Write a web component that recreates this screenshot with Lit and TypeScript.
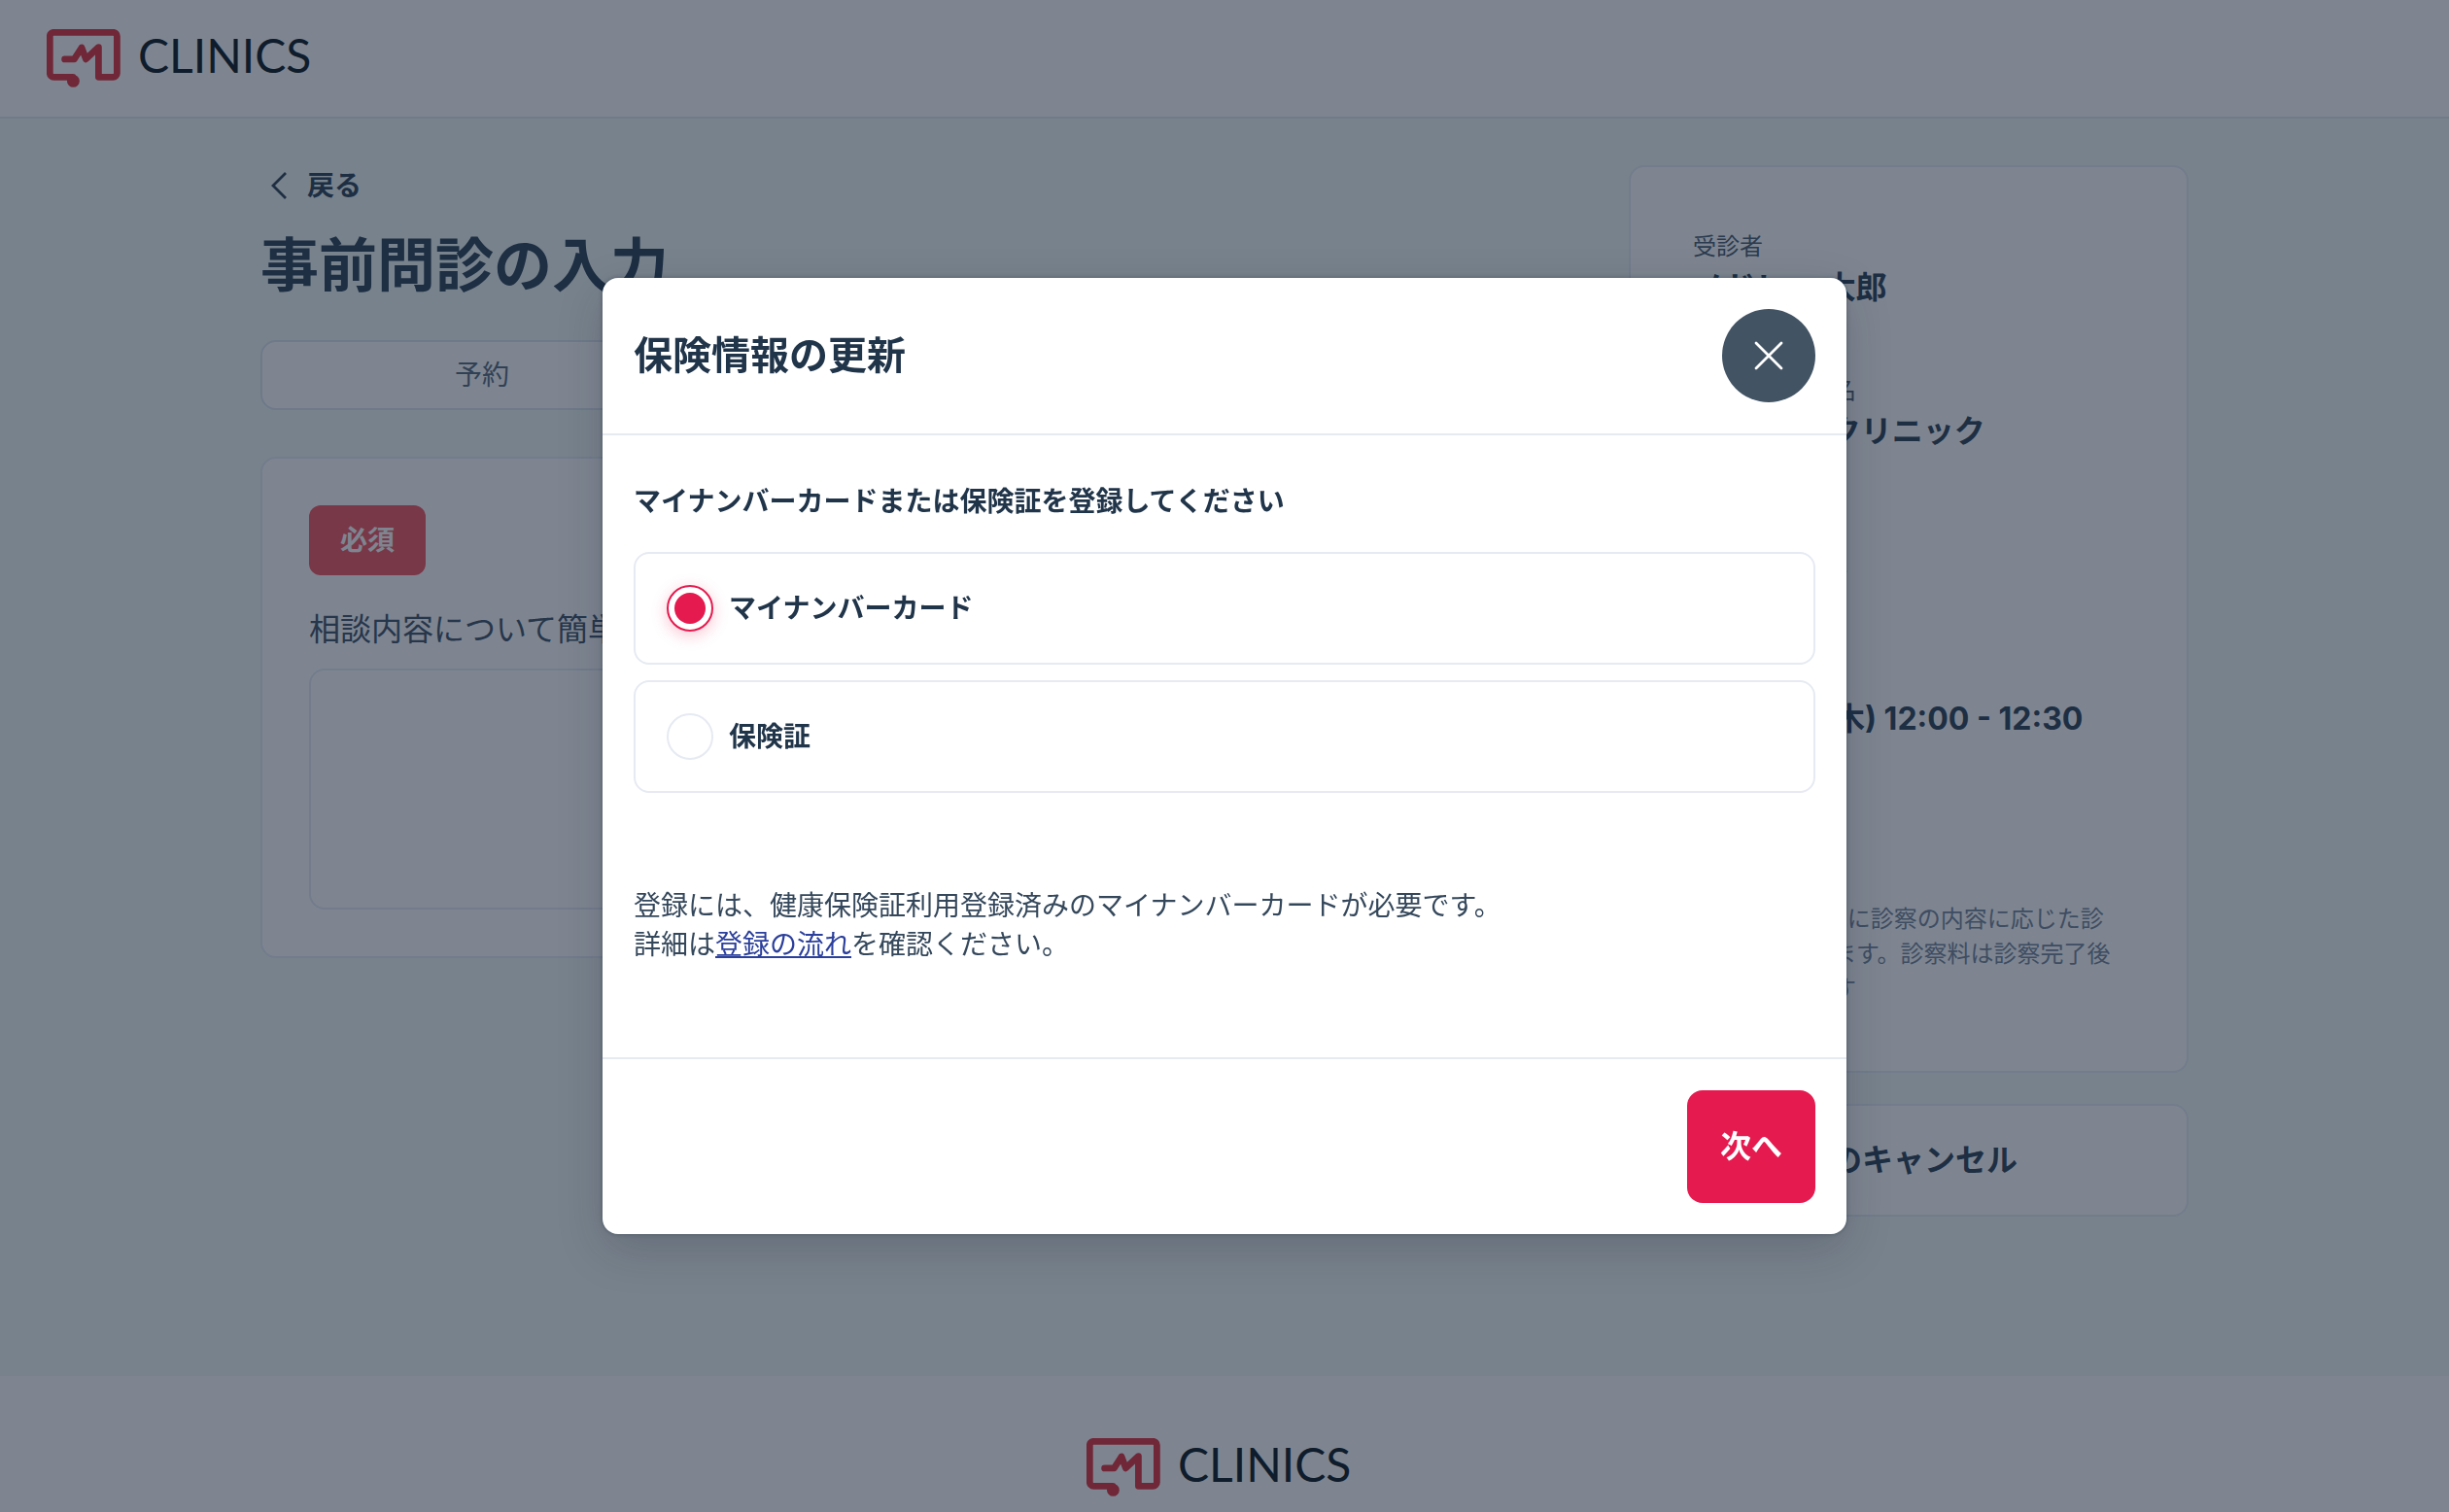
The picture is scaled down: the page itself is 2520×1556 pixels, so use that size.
import { LitElement, html, css } from "lit";
import { customElement, property, state } from "lit/decorators.js";

@customElement("clinics-logo")
class ClinicsLogo extends LitElement {
  static styles = css`
    :host {
      display: flex;
      align-items: center;
      gap: 18px;
      height: 60px;
    }
    .mark {
      width: 76px;
      height: 60px;
      flex: none;
    }
    .word {
      min-width: 190px;
      font-family: Lato, "Liberation Sans", sans-serif;
      font-size: 48px;
      line-height: 54px;
      height: 60px;
      color: #0b1722;
    }
  `;

  render() {
    return html`
      <svg class="mark" viewBox="0 0 76 60" fill="none" aria-hidden="true">
        <path
          d="M27 49.3H7.3a4 4 0 0 1-4-4V7.3a4 4 0 0 1 4-4H68.4a4 4 0 0 1 4 4V45.3a4 4 0 0 1-4 4H53.4V18.6L40.4 30.8 36 19 28.4 30.9H18.6"
          stroke="#e0303c"
          stroke-width="6.8"
          stroke-linecap="round"
          stroke-linejoin="round"
        />
        <circle cx="27.4" cy="53.4" r="6.4" fill="#e0303c" />
      </svg>
      <span class="word">CLINICS</span>
    `;
  }
}

@customElement("reservation-summary")
class ReservationSummary extends LitElement {
  @property({ attribute: false }) items: { label: string; value: string }[] = [];
  @property() note = "";

  static styles = css`
    :host {
      display: block;
      box-sizing: border-box;
      padding: 64px 64px 66px;
      border: 2px solid #e4ebf3;
      border-radius: 16px;
      background: #fff;
    }
    .list {
      display: grid;
      gap: 64px;
      margin: 0;
    }
    .label {
      font-size: 24px;
      line-height: 36px;
      color: #475b70;
    }
    .value {
      margin: 0;
      font-size: 32px;
      line-height: 48px;
      font-weight: 700;
      color: #2a4056;
    }
    .note {
      margin: 16px 0 0;
      font-size: 24px;
      line-height: 36px;
      color: #71839a;
    }
  `;

  render() {
    return html`
      <dl class="list">
        ${this.items.map(
          (item) => html`
            <div>
              <dt class="label">${item.label}</dt>
              <dd class="value">${item.value}</dd>
            </div>
          `
        )}
      </dl>
      <p class="note">${this.note}</p>
    `;
  }
}

@customElement("insurance-dialog")
class InsuranceDialog extends LitElement {
  @state() private selected = "mynumber";

  private options = [
    { id: "mynumber", label: "マイナンバーカード" },
    { id: "insurance", label: "保険証" },
  ];

  static styles = css`
    :host {
      position: fixed;
      inset: 0;
      display: grid;
      place-items: center;
      background: rgba(20, 32, 52, 0.55);
    }
    .dialog {
      width: 1280px;
      max-width: calc(100% - 64px);
      border-radius: 16px;
      background: #fff;
      box-shadow: 0 16px 48px rgba(20, 32, 52, 0.2), 0 0 4px rgba(20, 32, 52, 0.4);
      color: #21354a;
    }
    .head {
      display: flex;
      align-items: center;
      justify-content: space-between;
      padding: 32px;
      border-bottom: 2px solid #e6ebf1;
    }
    .title {
      margin: 0;
      font-size: 40px;
      line-height: 56px;
      font-weight: 600;
    }
    .close {
      display: grid;
      place-items: center;
      width: 96px;
      height: 96px;
      padding: 0;
      border: 0;
      border-radius: 50%;
      background: #425364;
    }
    .close svg {
      width: 32px;
      height: 32px;
    }
    .body {
      padding: 48px 32px 96px;
    }
    .choices {
      display: grid;
      gap: 16px;
      margin: 0;
      padding: 0;
      border: 0;
    }
    .lead {
      padding: 0;
      margin-bottom: 32px;
      font-size: 28px;
      line-height: 40px;
      font-weight: 600;
    }
    .choice {
      display: flex;
      align-items: center;
      gap: 16px;
      padding: 32px;
      border: 2px solid #e6eaf2;
      border-radius: 16px;
      font-size: 28px;
      line-height: 48px;
      font-weight: 600;
    }
    .radio {
      appearance: none;
      box-sizing: border-box;
      width: 48px;
      height: 48px;
      margin: 0;
      padding: 6px;
      border: 2px solid #e6eaf2;
      border-radius: 50%;
      background: #fff content-box;
    }
    .radio:checked {
      border-color: #e51a4f;
      background-color: #e51a4f;
      box-shadow: 0 4px 16px rgba(229, 26, 79, 0.25);
    }
    .note {
      margin: 96px 0 0;
      font-size: 28px;
      line-height: 40px;
      color: #34475b;
    }
    .link {
      color: #2b3f9c;
      text-decoration: underline;
    }
    .foot {
      display: flex;
      justify-content: flex-end;
      padding: 32px;
      border-top: 2px solid #e6ebf1;
    }
    .next {
      padding: 34px;
      border: 0;
      border-radius: 16px;
      background: #e51a4f;
      color: #fff;
      font: inherit;
      font-size: 32px;
      line-height: 48px;
      font-weight: 600;
    }
  `;

  render() {
    return html`
      <section class="dialog" role="dialog" aria-modal="true" aria-labelledby="title">
        <header class="head">
          <h2 class="title" id="title">保険情報の更新</h2>
          <button class="close" type="button" aria-label="閉じる">
            <svg viewBox="0 0 32 32" aria-hidden="true">
              <path
                d="M3 3L29 29M29 3L3 29"
                stroke="#fff"
                stroke-width="2.8"
                stroke-linecap="round"
              />
            </svg>
          </button>
        </header>
        <div class="body">
          <fieldset class="choices">
            <legend class="lead">マイナンバーカードまたは保険証を登録してください</legend>
            ${this.options.map(
              (o) => html`
                <label class="choice" for=${o.id}>
                  <input
                    class="radio"
                    type="radio"
                    name="kind"
                    id=${o.id}
                    .checked=${this.selected === o.id}
                    @change=${() => (this.selected = o.id)}
                  />
                  <span>${o.label}</span>
                </label>
              `
            )}
          </fieldset>
          <p class="note">
            登録には、健康保険証利用登録済みのマイナンバーカードが必要です。<br />詳細は<a
              class="link"
              href="#flow"
              >登録の流れ</a
            >を確認ください。
          </p>
        </div>
        <footer class="foot">
          <button class="next" type="button">次へ</button>
        </footer>
      </section>
    `;
  }
}

@customElement("app-root")
class AppRoot extends LitElement {
  private steps = ["予約", "問診", "完了"];

  private summary = [
    { label: "受診者", value: "メドレー 太郎" },
    { label: "受診医療機関名", value: "MEDLEY クリニック" },
    { label: "診療メニュー", value: "オンライン" },
    { label: "予約日時", value: "11月24日(木) 12:00 - 12:30" },
    { label: "予約料", value: "0円" },
  ];

  static styles = css`
    :host {
      display: flex;
      flex-direction: column;
      min-height: 100vh;
      background: #f2f8f5;
      font-family: Inter, "Noto Sans CJK JP", sans-serif;
      color: #2a4056;
    }
    .header {
      padding: 30px 48px;
      border-bottom: 2px solid #dfe8f1;
      background: #fff;
    }
    .main {
      flex: 1;
      display: grid;
      grid-template-columns: minmax(0, 1fr) 576px;
      align-items: start;
      gap: 48px;
      box-sizing: border-box;
      width: 100%;
      max-width: 2080px;
      margin: 0 auto;
      padding: 48px 48px 160px;
    }
    .back {
      display: flex;
      align-items: center;
      gap: 16px;
      width: max-content;
      color: inherit;
      text-decoration: none;
      font-size: 28px;
      line-height: 42px;
      font-weight: 600;
    }
    .back svg {
      width: 32px;
      height: 32px;
    }
    .heading {
      margin: 16px 0 32px;
      font-size: 60px;
      line-height: 90px;
      font-weight: 600;
    }
    .steps {
      display: grid;
      grid-template-columns: repeat(3, 1fr);
      margin: 0 0 48px;
      padding: 0;
      list-style: none;
      border: 2px solid #dbe5ef;
      border-radius: 16px;
      background: #fff;
      text-align: center;
      font-size: 28px;
      line-height: 68px;
      color: #54687d;
    }
    .card {
      padding: 48px;
      border: 2px solid #e4ebf3;
      border-radius: 16px;
      background: #fff;
    }
    .required {
      display: inline-block;
      vertical-align: top;
      padding: 0 32px;
      border-radius: 12px;
      background: #f25460;
      color: #fff;
      font-size: 28px;
      line-height: 72px;
      font-weight: 600;
    }
    .question {
      display: block;
      margin: 32px 0 16px;
      font-size: 32px;
      line-height: 48px;
      color: #3c5167;
    }
    .answer {
      display: block;
      box-sizing: border-box;
      width: 100%;
      height: 248px;
      padding: 24px;
      border: 2px solid #e4ebf3;
      border-radius: 16px;
      background: #fff;
      font: inherit;
      resize: none;
    }
    .side {
      display: grid;
      gap: 32px;
    }
    .cancel {
      padding: 32px 64px 32px 32px;
      border: 2px solid #e4ebf3;
      border-radius: 16px;
      background: #fff;
      color: inherit;
      font: inherit;
      font-size: 32px;
      line-height: 48px;
      font-weight: 600;
    }
    .footer {
      display: flex;
      justify-content: center;
      padding: 64px 48px 16px;
      background: #fff;
    }
  `;

  render() {
    return html`
      <header class="header"><clinics-logo></clinics-logo></header>
      <main class="main">
        <div>
          <a class="back" href="#back">
            <svg viewBox="0 0 32 32" fill="none" aria-hidden="true">
              <path d="M26 3L13 16L26 29" stroke="currentColor" stroke-width="2.8" />
            </svg>
            戻る
          </a>
          <h1 class="heading">事前問診の入力</h1>
          <ol class="steps">
            ${this.steps.map((s) => html`<li>${s}</li>`)}
          </ol>
          <section class="card">
            <span class="required">必須</span>
            <label class="question" for="answer">相談内容について簡単に記入</label>
            <textarea class="answer" id="answer"></textarea>
          </section>
        </div>
        <aside class="side">
          <reservation-summary
            .items=${this.summary}
            note="※1. 予約料の他に診察の内容に応じた診察料が発生します。診察料は診察完了後に決済されます"
          ></reservation-summary>
          <button class="cancel" type="button">予約のキャンセル</button>
        </aside>
      </main>
      <footer class="footer"><clinics-logo></clinics-logo></footer>
      <insurance-dialog></insurance-dialog>
    `;
  }
}
